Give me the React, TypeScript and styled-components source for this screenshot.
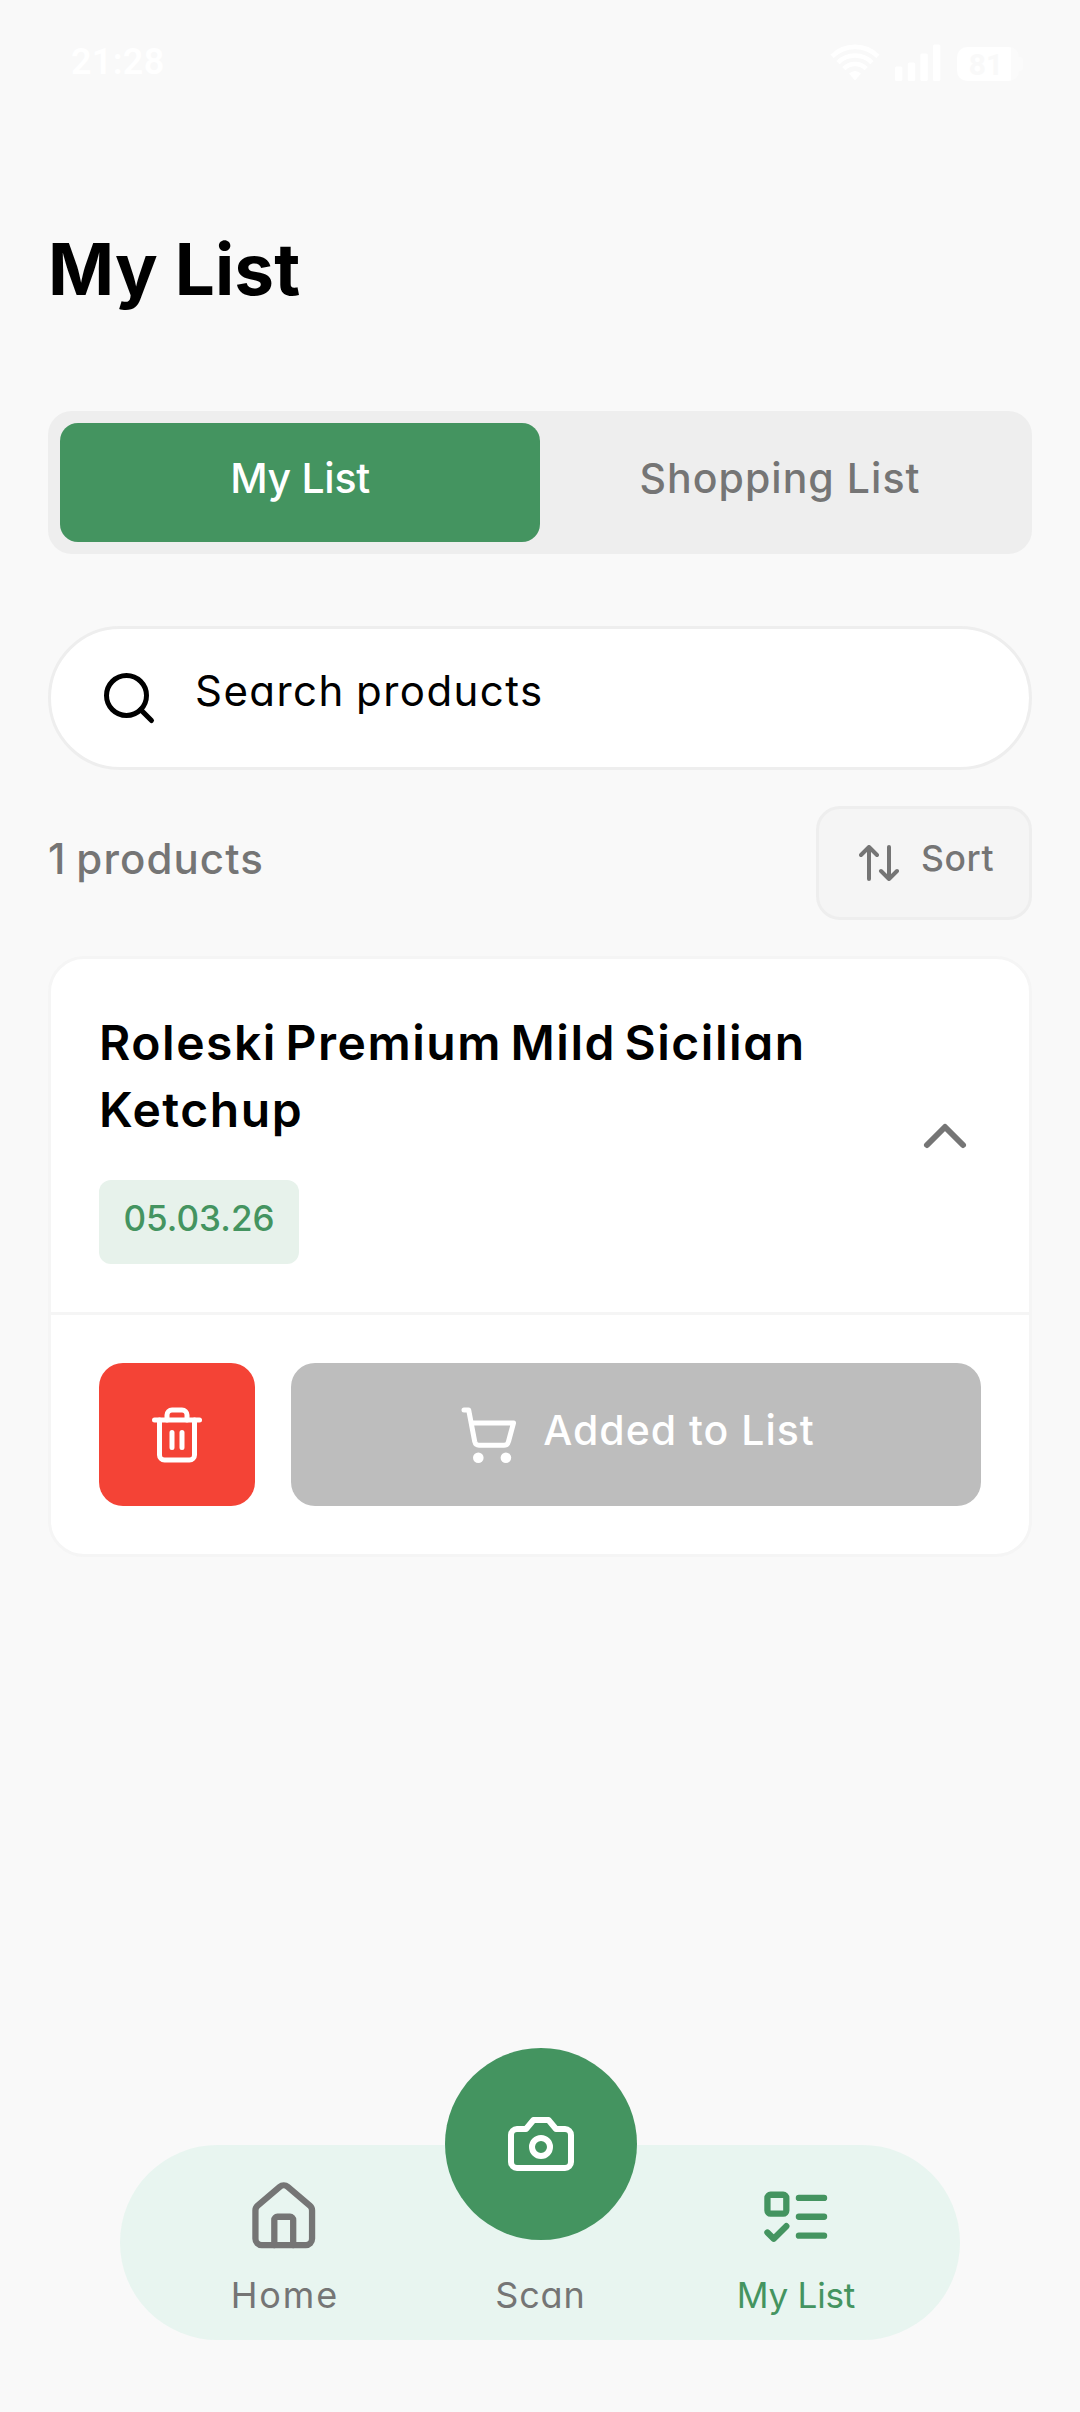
import React from "react";
import styled, { createGlobalStyle } from "styled-components";

const color = {
  page: "#f9f9f9",
  green: "#449460",
  mint: "#e8f5f0",
  badge: "#e7f2eb",
  grey: "#757575",
  line: "#eeeeee",
  faint: "#f5f5f5",
  disabled: "#bdbdbd",
  red: "#f44336",
};

const GlobalStyle = createGlobalStyle`
  *, *::before, *::after { box-sizing: border-box; }
  body {
    margin: 0;
    background: ${color.page};
    font-family: "Inter", "Liberation Sans", sans-serif;
    font-feature-settings: "cv11", "calt" 0;
  }
  button { font: inherit; font-feature-settings: inherit; border: 0; padding: 0; margin: 0; }
  svg { display: block; flex: none; }
`;

const Screen = styled.main`
  display: flex;
  flex-direction: column;
  width: 1080px;
  height: 2412px;
  padding: 0 48px 72px;
  background: ${color.page};
  color: #000;
`;

/* ---------- status bar ---------- */

const StatusBar = styled.header`
  display: flex;
  align-items: center;
  justify-content: space-between;
  height: 120px;
  padding: 4px 9px 0 23px;
  color: #fff;
`;

const Clock = styled.span`
  font-family: "Roboto", sans-serif;
  font-size: 36px;
  font-weight: 600;
  line-height: 40px;
  letter-spacing: 0.3px;
`;

const StatusIcons = styled.div`
  display: flex;
  align-items: flex-end;
  gap: 15px;
`;

const Battery = styled.div`
  display: flex;
  align-items: center;
  height: 34px;
  margin-left: 1px;
`;

const BatteryBody = styled.div`
  width: 62px;
  height: 34px;
  padding-right: 4px;
  border-radius: 10px;
  background: linear-gradient(90deg, #fff 54px, #fbfbfb 54px);
  color: ${color.page};
  font-family: "Roboto", sans-serif;
  font-size: 30px;
  font-weight: 700;
  line-height: 35px;
  text-align: center;
`;

const BatteryTip = styled.div`
  width: 4px;
  height: 14px;
  border-radius: 0 4px 4px 0;
  background: #fbfbfb;
`;

/* ---------- heading and tabs ---------- */

const Title = styled.h1`
  margin: 100px 0 0;
  font-size: 71px;
  font-weight: 700;
  line-height: 99px;
  letter-spacing: 0.1px;
`;

const Tabs = styled.div`
  display: flex;
  height: 143px;
  margin-top: 92px;
  padding: 12px;
  border-radius: 24px;
  background: ${color.line};
`;

const Tab = styled.button<{ $active?: boolean; $spacing: number }>`
  flex: 1;
  padding-bottom: 10px;
  border-radius: 18px;
  background: ${(p) => (p.$active ? color.green : "transparent")};
  color: ${(p) => (p.$active ? "#fff" : color.grey)};
  font-size: 41px;
  font-weight: 500;
  letter-spacing: ${(p) => p.$spacing}px;
`;

/* ---------- search ---------- */

const SearchBox = styled.div`
  display: flex;
  align-items: center;
  gap: 36px;
  height: 144px;
  margin-top: 72px;
  padding-left: 48px;
  border: 3px solid ${color.line};
  border-radius: 72px;
  background: #fff;
`;

const SearchText = styled.span`
  padding-bottom: 14px;
  font-size: 42px;
  line-height: 60px;
  letter-spacing: 1.45px;
  word-spacing: -2px;
`;

/* ---------- count and sort ---------- */

const Toolbar = styled.div`
  display: flex;
  align-items: center;
  justify-content: space-between;
  height: 114px;
  margin-top: 36px;
`;

const Count = styled.span`
  padding-bottom: 8px;
  color: ${color.grey};
  font-size: 42px;
  font-weight: 500;
  line-height: 60px;
  letter-spacing: 1.1px;
  word-spacing: -2.5px;
`;

const SortButton = styled.button`
  display: flex;
  align-items: center;
  gap: 22px;
  width: 216px;
  height: 114px;
  padding-left: 40px;
  border: 3px solid ${color.line};
  border-radius: 24px;
  background: ${color.faint};
  color: ${color.grey};
`;

const SortLabel = styled.span`
  padding-bottom: 8px;
  font-size: 35.5px;
  font-weight: 500;
  line-height: 50px;
  letter-spacing: 0.6px;
`;

/* ---------- product card ---------- */

const Card = styled.article`
  margin-top: 36px;
  border: 3px solid ${color.faint};
  border-radius: 36px;
  background: #fff;
`;

const CardHeader = styled.div`
  display: flex;
  align-items: center;
  height: 353px;
  padding: 48px;
`;

const CardInfo = styled.div`
  display: flex;
  flex: 1;
  flex-direction: column;
  align-items: flex-start;
  gap: 37px;
`;

const ProductName = styled.h2`
  margin: 0;
  padding-top: 2px;
  font-size: 48px;
  font-weight: 600;
  line-height: 67px;
  letter-spacing: 1.55px;
  word-spacing: -5.2px;
`;

const DateBadge = styled.span`
  width: 200px;
  height: 84px;
  border-radius: 12px;
  background: ${color.badge};
  color: ${color.green};
  font-size: 35px;
  font-weight: 500;
  line-height: 76px;
  text-align: center;
`;

const CardActions = styled.div`
  display: flex;
  gap: 36px;
  padding: 48px;
  border-top: 3px solid ${color.faint};
`;

const ActionButton = styled.button<{ $tone: string; $grow?: boolean }>`
  display: flex;
  align-items: center;
  justify-content: center;
  gap: 26px;
  ${(p) => (p.$grow ? "flex: 1;" : "width: 156px;")}
  height: 143px;
  border-radius: 24px;
  background: ${(p) => p.$tone};
  color: #fff;
`;

const ActionLabel = styled.span`
  padding-bottom: 9px;
  font-size: 41px;
  font-weight: 500;
  line-height: 60px;
  letter-spacing: 1px;
`;

/* ---------- bottom navigation ---------- */

const Spacer = styled.div`
  flex: 1;
`;

const Nav = styled.nav`
  position: relative;
  display: grid;
  grid-template-columns: repeat(3, 256px);
  justify-content: center;
  align-self: center;
  width: 840px;
  height: 195px;
  border-radius: 97.5px;
  background: ${color.mint};
`;

const NavItem = styled.a<{ $active?: boolean }>`
  display: flex;
  flex-direction: column;
  align-items: center;
  justify-content: flex-end;
  gap: 17px;
  padding-bottom: 21px;
  color: ${(p) => (p.$active ? color.green : color.grey)};
`;

const NavLabel = styled.span<{ $spacing: number; $size?: number }>`
  margin-right: ${(p) => -p.$spacing}px;
  font-size: ${(p) => p.$size ?? 36}px;
  line-height: 48px;
  letter-spacing: ${(p) => p.$spacing}px;
`;

const ScanButton = styled.button`
  position: absolute;
  top: -97px;
  left: 325px;
  display: flex;
  align-items: center;
  justify-content: center;
  width: 192px;
  height: 192px;
  border-radius: 50%;
  background: ${color.green};
  color: #fff;
`;

/* ---------- icons ---------- */

type IconProps = { size: number; children: React.ReactNode };

const Icon = ({ size, children }: IconProps) => (
  <svg
    width={size}
    height={size}
    viewBox="0 0 24 24"
    fill="none"
    stroke="currentColor"
    strokeWidth={2}
    strokeLinecap="round"
    strokeLinejoin="round"
  >
    {children}
  </svg>
);

const WifiIcon = () => (
  <svg width="50" height="37" viewBox="0 0 50 37" fill="none" stroke="#fff" strokeWidth="4.6">
    <path d="M2 12.4A32.5 32.5 0 0 1 48 12.4" />
    <path d="M8 18.6A24 24 0 0 1 42 18.6" />
    <path d="M13.8 24.6A16 16 0 0 1 36.2 24.6" />
    <path d="M19 29.6Q25 24.4 31 29.6L25 36.5Z" fill="#fff" stroke="none" />
  </svg>
);

const SignalIcon = () => (
  <svg width="46" height="37" viewBox="0 0 46 37" fill="#fff">
    <rect x="0" y="22.5" width="7.4" height="14.5" rx="1.5" />
    <rect x="12.8" y="18.5" width="7.4" height="18.5" rx="1.5" />
    <rect x="25.4" y="9.5" width="7.4" height="27.5" rx="1.5" />
    <rect x="38" y="0.5" width="7.4" height="36.5" rx="1.5" />
  </svg>
);

const SortIcon = () => (
  <svg
    width="40"
    height="36"
    viewBox="0 0 40 36"
    fill="none"
    stroke="currentColor"
    strokeWidth="4"
    strokeLinecap="round"
    strokeLinejoin="round"
  >
    <path d="M2 10l8-8 8 8M10 2v32M22 26l8 8 8-8M30 34V2" />
  </svg>
);

const CartIcon = () => (
  <svg
    width="60"
    height="60"
    viewBox="0 0 60 60"
    fill="none"
    stroke="currentColor"
    strokeWidth="5"
    strokeLinecap="round"
    strokeLinejoin="round"
  >
    <path d="M7 5h4.7l6 31.5Q18.6 40.3 22 40.3H47Q50.6 40.3 51.5 36.5L56.5 18H14.5" />
    <circle cx="21.3" cy="52.7" r="5.3" fill="currentColor" stroke="none" />
    <circle cx="48.9" cy="52.7" r="5.3" fill="currentColor" stroke="none" />
  </svg>
);

export default function App() {
  return (
    <>
      <GlobalStyle />
      <Screen>
        <StatusBar>
          <Clock>21:28</Clock>
          <StatusIcons>
            <WifiIcon />
            <SignalIcon />
            <Battery>
              <BatteryBody>81</BatteryBody>
              <BatteryTip />
            </Battery>
          </StatusIcons>
        </StatusBar>

        <Title>My List</Title>

        <Tabs>
          <Tab $active $spacing={-0.3}>
            My List
          </Tab>
          <Tab $spacing={1.05}>Shopping List</Tab>
        </Tabs>

        <SearchBox>
          <Icon size={60}>
            <circle cx="11" cy="11" r="8" />
            <path d="m21 21-4.35-4.35" />
          </Icon>
          <SearchText>Search products</SearchText>
        </SearchBox>

        <Toolbar>
          <Count>1 products</Count>
          <SortButton>
            <SortIcon />
            <SortLabel>Sort</SortLabel>
          </SortButton>
        </Toolbar>

        <Card>
          <CardHeader>
            <CardInfo>
              <ProductName>Roleski Premium Mild Sicilian Ketchup</ProductName>
              <DateBadge>05.03.26</DateBadge>
            </CardInfo>
            <Icon size={72}>
              <path d="m18 15-6-6-6 6" stroke={color.grey} />
            </Icon>
          </CardHeader>
          <CardActions>
            <ActionButton $tone={color.red} aria-label="Delete">
              <Icon size={60}>
                <path d="M3 6h18" />
                <path d="M19 6v14a2 2 0 0 1-2 2H7a2 2 0 0 1-2-2V6" />
                <path d="M8 6V4a2 2 0 0 1 2-2h4a2 2 0 0 1 2 2v2" />
                <path d="M10 11v6M14 11v6" />
              </Icon>
            </ActionButton>
            <ActionButton $tone={color.disabled} $grow>
              <CartIcon />
              <ActionLabel>Added to List</ActionLabel>
            </ActionButton>
          </CardActions>
        </Card>

        <Spacer />

        <Nav>
          <NavItem>
            <Icon size={75.5}>
              <path d="M15 21v-8a1 1 0 0 0-1-1h-4a1 1 0 0 0-1 1v8" />
              <path d="M3 10a2 2 0 0 1 .709-1.528l7-5.999a2 2 0 0 1 2.582 0l7 5.999A2 2 0 0 1 21 10v9a2 2 0 0 1-2 2H5a2 2 0 0 1-2-2z" />
            </Icon>
            <NavLabel $spacing={1.9}>Home</NavLabel>
          </NavItem>
          <NavItem>
            <NavLabel $spacing={0.9}>Scan</NavLabel>
          </NavItem>
          <NavItem $active>
            <Icon size={75.5}>
              <rect x="3" y="5" width="6" height="6" rx="1" />
              <path d="m3 17 2 2 4-4M13 6h8M13 12h8M13 18h8" />
            </Icon>
            <NavLabel $spacing={-0.3} $size={35.2}>
              My List
            </NavLabel>
          </NavItem>
          <ScanButton aria-label="Scan">
            <Icon size={72}>
              <path d="M14.5 4h-5L7 7H4a2 2 0 0 0-2 2v9a2 2 0 0 0 2 2h16a2 2 0 0 0 2-2V9a2 2 0 0 0-2-2h-3l-2.5-3z" />
              <circle cx="12" cy="13" r="3" />
            </Icon>
          </ScanButton>
        </Nav>
      </Screen>
    </>
  );
}
